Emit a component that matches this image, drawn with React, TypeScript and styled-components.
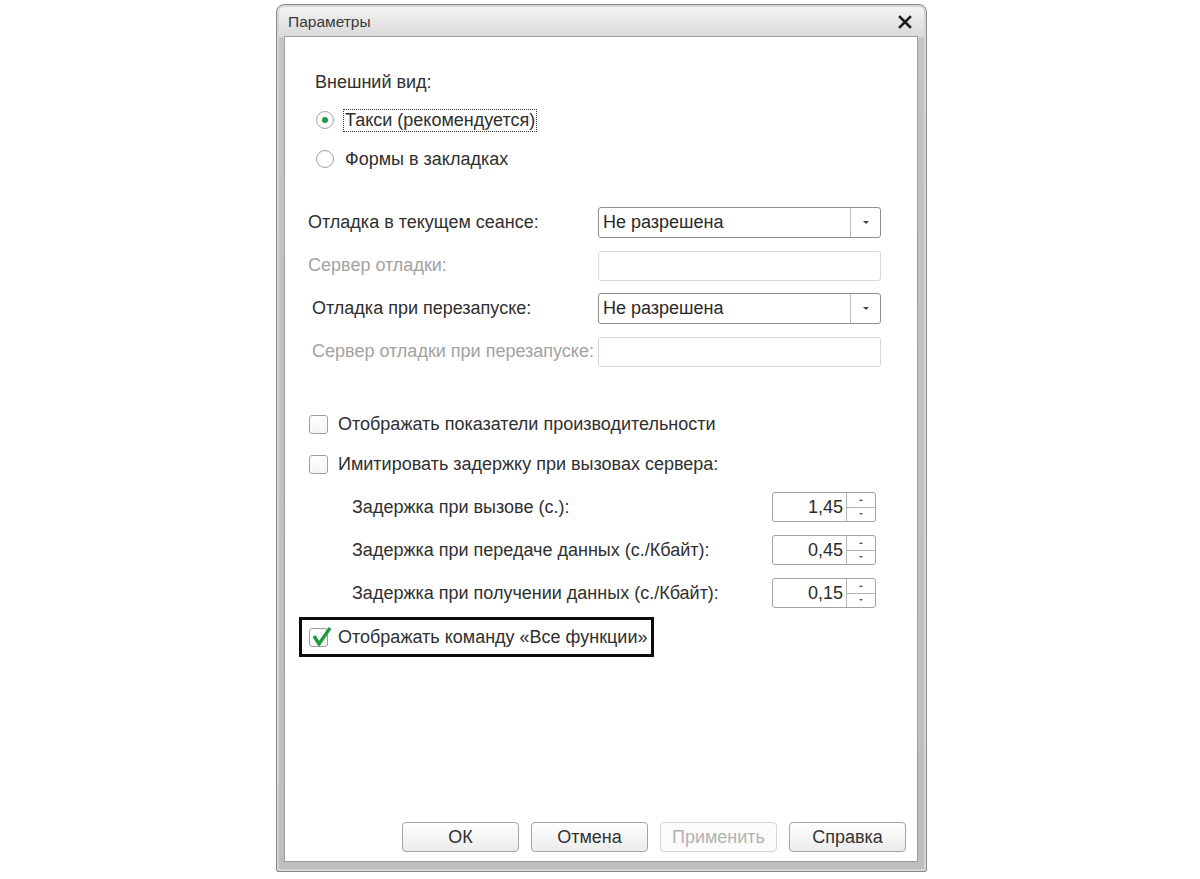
import styled, { createGlobalStyle } from "styled-components";

const GlobalStyle = createGlobalStyle`
  body {
    margin: 0;
    background: #fff;
    font-family: "Liberation Sans", Arial, sans-serif;
    color: #333;
  }
`;

export default function App() {
  return (
    <>
      <GlobalStyle />
      <Page>
        <Dialog>
          <TitleBar>
            <span className="title">Параметры</span>
            <CloseIcon />
          </TitleBar>
          <Panel>
            <Appearance>
              <Heading>Внешний вид:</Heading>
              <RadioRow $top={14}>
                <Radio $checked />
                <FocusLabel>Такси (рекомендуется)</FocusLabel>
              </RadioRow>
              <RadioRow $top={15}>
                <Radio />
                <span className="text">Формы в закладках</span>
              </RadioRow>
            </Appearance>

            <DebugGrid>
              <FieldLabel>Отладка в текущем сеансе:</FieldLabel>
              <Select value="Не разрешена" />
              <FieldLabel $disabled>Сервер отладки:</FieldLabel>
              <TextInput />
              <FieldLabel $shift={4}>Отладка при перезапуске:</FieldLabel>
              <Select value="Не разрешена" />
              <FieldLabel $shift={4} $disabled>
                Сервер отладки при перезапуске:
              </FieldLabel>
              <TextInput />
            </DebugGrid>

            <CheckList>
              <CheckRow>
                <CheckBox />
                <span>Отображать показатели производительности</span>
              </CheckRow>
              <CheckRow>
                <CheckBox />
                <span>Имитировать задержку при вызовах сервера:</span>
              </CheckRow>
            </CheckList>

            <SpinList>
              {delays.map((d) => (
                <SpinRow key={d.label}>
                  <span>{d.label}</span>
                  <Spin value={d.value} />
                </SpinRow>
              ))}
            </SpinList>

            <Highlight>
              <CheckBox checked />
              <span>Отображать команду «Все функции»</span>
            </Highlight>

            <ButtonBar>
              <Button>ОК</Button>
              <Button>Отмена</Button>
              <Button disabled>Применить</Button>
              <Button>Справка</Button>
            </ButtonBar>
          </Panel>
        </Dialog>
      </Page>
    </>
  );
}

const delays = [
  { label: "Задержка при вызове (с.):", value: "1,45" },
  { label: "Задержка при передаче данных (с./Кбайт):", value: "0,45" },
  { label: "Задержка при получении данных (с./Кбайт):", value: "0,15" },
];

const Page = styled.div`
  width: 1200px;
  height: 879px;
  box-sizing: border-box;
  padding: 4px 0 0 276px;
  overflow: hidden;
`;

const Dialog = styled.div`
  width: 651px;
  height: 868px;
  box-sizing: border-box;
  display: flex;
  flex-direction: column;
  border: 1px solid #8a8a8a;
  border-radius: 8px 8px 2px 2px;
  padding: 0 8px 9px 7px;
  background: linear-gradient(to bottom, #f4f4f4 0, #d9d9d9 32px, #c4c4c4 33px, #bebebe 100%);
  box-shadow: inset 0 0 0 2px #d6d6d6;
`;

const TitleBar = styled.div`
  height: 31px;
  display: flex;
  align-items: center;
  justify-content: space-between;
  padding: 0 6px 0 4px;

  .title {
    font-size: 15.5px;
    color: #3a3a3a;
    margin-top: 3px;
  }
`;

function CloseIcon() {
  return (
    <svg width="14" height="14" viewBox="0 0 14 14" style={{ marginTop: 3 }}>
      <path d="M2 2 L12 12 M12 2 L2 12" stroke="#1e1e1e" strokeWidth="2.6" strokeLinecap="square" />
    </svg>
  );
}

const Panel = styled.div`
  flex: 1;
  display: flex;
  flex-direction: column;
  background: #fff;
  border: 1px solid #9c9c9c;
  font-size: 18px;
  color: #2f2f2f;
`;

const Appearance = styled.div`
  margin-top: 33px;
  padding-left: 30px;
  display: flex;
  flex-direction: column;
`;

const Heading = styled.div`
  height: 24px;
  line-height: 24px;
`;

const RadioRow = styled.div<{ $top: number }>`
  height: 24px;
  margin-top: ${(p) => p.$top}px;
  display: flex;
  align-items: center;
  gap: 10px;

  .text {
    padding-left: 1px;
  }
`;

const Radio = styled.span<{ $checked?: boolean }>`
  width: 18px;
  height: 18px;
  margin-left: 1px;
  box-sizing: border-box;
  border-radius: 50%;
  border: 1px solid #a4a4a4;
  background: radial-gradient(circle, #fff 55%, #f0f0f0 100%);
  display: flex;
  align-items: center;
  justify-content: center;

  &::after {
    content: "";
    display: ${(p) => (p.$checked ? "block" : "none")};
    width: 6px;
    height: 6px;
    border-radius: 50%;
    background: #1f9a45;
  }
`;

const FocusLabel = styled.span`
  outline: 1px dotted #333;
  outline-offset: 0;
  padding: 0 1px;
  line-height: 21px;
`;

const DebugGrid = styled.div`
  margin-top: 36px;
  padding-left: 23px;
  display: grid;
  grid-template-columns: 290px 283px;
  grid-auto-rows: 31px;
  row-gap: 12px;
  align-items: center;
`;

const FieldLabel = styled.span<{ $disabled?: boolean; $shift?: number }>`
  padding-left: ${(p) => p.$shift ?? 0}px;
  color: ${(p) => (p.$disabled ? "#a2a2a2" : "#2f2f2f")};
  white-space: nowrap;
`;

const SelectBox = styled.div`
  height: 31px;
  box-sizing: border-box;
  border: 1px solid #8e8e8e;
  border-radius: 3px;
  display: flex;
  align-items: stretch;
  background: #fff;

  .value {
    flex: 1;
    padding-left: 4px;
    line-height: 29px;
    color: #2a2a2a;
  }
  .drop {
    width: 29px;
    border-left: 1px solid #b9b9b9;
    display: flex;
    align-items: center;
    justify-content: center;
  }
  .drop::after {
    content: "";
    border-left: 3px solid transparent;
    border-right: 3px solid transparent;
    border-top: 3px solid #444;
  }
`;

function Select({ value }: { value: string }) {
  return (
    <SelectBox>
      <span className="value">{value}</span>
      <span className="drop" />
    </SelectBox>
  );
}

const TextInput = styled.div`
  height: 30px;
  box-sizing: border-box;
  border: 1px solid #d8d8d8;
  border-radius: 3px;
  background: #fff;
`;

const CheckList = styled.div`
  margin-top: 47px;
  padding-left: 24px;
  display: flex;
  flex-direction: column;
  gap: 20px;
`;

const CheckRow = styled.div`
  height: 20px;
  display: flex;
  align-items: center;
  gap: 10px;
`;

const Box = styled.span`
  position: relative;
  width: 19px;
  height: 19px;
  flex: none;
  box-sizing: border-box;
  border: 1px solid #9f9f9f;
  border-radius: 3px;
  background: linear-gradient(#fff, #f4f4f4);

  svg {
    position: absolute;
    left: 1px;
    top: -3px;
    overflow: visible;
  }
`;

function CheckBox({ checked }: { checked?: boolean }) {
  return (
    <Box>
      {checked && (
        <svg width="20" height="20" viewBox="0 0 20 20">
          <path d="M3 10 L8 18 L19 2" fill="none" stroke="#1d9b3d" strokeWidth="3.4" strokeLinejoin="miter" />
        </svg>
      )}
    </Box>
  );
}

const SpinList = styled.div`
  margin-top: 18px;
  padding-left: 67px;
  display: flex;
  flex-direction: column;
  gap: 13px;
`;

const SpinRow = styled.div`
  width: 524px;
  height: 30px;
  display: flex;
  align-items: center;
  justify-content: space-between;
`;

const SpinBox = styled.div`
  width: 104px;
  height: 30px;
  box-sizing: border-box;
  border: 1px solid #a2a2a2;
  border-radius: 3px;
  display: flex;
  background: #fff;

  .value {
    flex: 1;
    text-align: right;
    padding-right: 3px;
    line-height: 28px;
    color: #2a2a2a;
  }
  .buttons {
    width: 28px;
    border-left: 1px solid #b4b4b4;
    display: flex;
    flex-direction: column;
  }
`;

const SpinHalf = styled.span<{ $down?: boolean }>`
  flex: 1;
  display: flex;
  align-items: center;
  justify-content: center;
  border-top: ${(p) => (p.$down ? "1px solid #b4b4b4" : "none")};

  &::after {
    content: "";
    border-left: 2px solid transparent;
    border-right: 2px solid transparent;
    ${(p) => (p.$down ? "border-top: 2px solid #555;" : "border-bottom: 2px solid #555;")}
  }
`;

function Spin({ value }: { value: string }) {
  return (
    <SpinBox>
      <span className="value">{value}</span>
      <span className="buttons">
        <SpinHalf />
        <SpinHalf $down />
      </span>
    </SpinBox>
  );
}

const Highlight = styled.div`
  margin: 9px 0 0 14px;
  width: 355px;
  height: 40px;
  box-sizing: border-box;
  border: 3px solid #0c0c0c;
  padding-left: 7px;
  display: flex;
  align-items: center;
  gap: 10px;
`;

const ButtonBar = styled.div`
  margin-top: auto;
  padding: 0 11px 9px 0;
  display: flex;
  justify-content: flex-end;
  gap: 12px;
`;

const Button = styled.button`
  width: 117px;
  height: 30px;
  box-sizing: border-box;
  border: 1px solid #a4a4a4;
  border-radius: 4px;
  background: linear-gradient(#fefefe, #ececec);
  font-family: inherit;
  font-size: 18px;
  color: #333;
  padding: 0;

  &:disabled {
    border-color: #d6d6d6;
    background: #fbfbfb;
    color: #b2b2b2;
  }
`;
